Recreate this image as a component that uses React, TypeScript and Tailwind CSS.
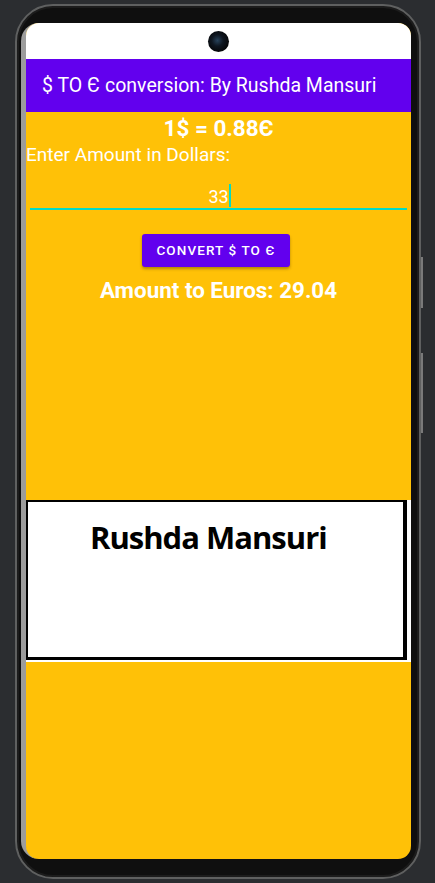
import React from "react";

export default function App() {
  return (
    <div
      className="w-[435px] h-[883px] bg-[#2b2d30] flex pt-[4px] pl-[15px] overflow-hidden"
      style={{ fontFamily: "Roboto, 'Noto Sans', sans-serif" }}
    >
      {/* phone body */}
      <div className="w-[406px] h-[875px] shrink-0 rounded-[38px] border-2 border-[#5f6060] bg-[#0f0f0f] pt-[17px] pb-[18px] pl-[4px] pr-[8px] flex shadow-[inset_0_0_0_2px_#1c1c1c]">
        <div className="flex-1 flex rounded-l-[18px] border-l-[5px] border-[#9c9c9c]">
          {/* screen */}
          <div className="w-[385px] h-[836px] rounded-[13px] overflow-hidden bg-[#ffc107] flex flex-col">
            {/* status bar with camera */}
            <div className="h-[36px] bg-white flex items-center justify-center">
              <div className="w-[21px] h-[21px] rounded-full bg-[radial-gradient(circle_at_45%_45%,#27425a_0%,#0e1620_35%,#050505_75%)]" />
            </div>
            {/* toolbar */}
            <div className="h-[53px] bg-[#6200ee] flex items-center pl-[16px] pt-[1px] text-white text-[19.5px] leading-[22px]">
              $ TO Є conversion: By Rushda Mansuri
            </div>
            {/* content */}
            <div className="flex-1 flex flex-col">
              <div className="mt-[4px] text-center text-white font-bold text-[22.5px] leading-[24px]">
                1$ = 0.88Є
              </div>
              <div className="mt-[4px] text-white text-[19px] leading-[21px]">
                Enter Amount in Dollars:
              </div>
              <div className="mx-[4px] mt-[19px] flex flex-col">
                <div className="flex justify-center items-end h-[23px]">
                  <span className="text-white text-[18px] leading-[21px]">33</span>
                  <span className="w-[2px] h-[23px] bg-[#03dac5] -mr-[2px]" />
                </div>
                <div className="h-[2px] mt-[1px] bg-[#03dac5]" />
              </div>
              <button className="self-start ml-[116px] mt-[24px] w-[148px] h-[33px] rounded-[3px] bg-[#6200ee] text-white text-[13.5px] font-medium tracking-[1.1px] shadow-[0_2px_3px_rgba(0,0,0,0.3)] flex items-center justify-center">
                CONVERT $ TO Є
              </button>
              <div className="mt-[11px] text-center text-white font-bold text-[22.4px] leading-[24px]">
                Amount to Euros: 29.04
              </div>
              {/* image box */}
              <div className="mt-[198px] h-[162px] bg-white">
                <div className="w-[381px] h-[160px] border-l-2 border-t-2 border-r-[4px] border-b-[3px] border-black pl-[62px] pt-[20px]">
                  <div
                    className="text-black font-bold text-[31px] leading-[31px] tracking-[-1px]"
                    style={{ fontFamily: "'Open Sans', 'Noto Sans', sans-serif" }}
                  >
                    Rushda Mansuri
                  </div>
                </div>
              </div>
              <div className="flex-1" />
            </div>
          </div>
        </div>
      </div>
      {/* side buttons */}
      <div className="w-[3px] flex flex-col">
        <div className="mt-[253px] h-[51px] w-[2px] bg-[#7a7a7a]" />
        <div className="mt-[45px] h-[80px] w-[2px] bg-[#7a7a7a]" />
      </div>
    </div>
  );
}
